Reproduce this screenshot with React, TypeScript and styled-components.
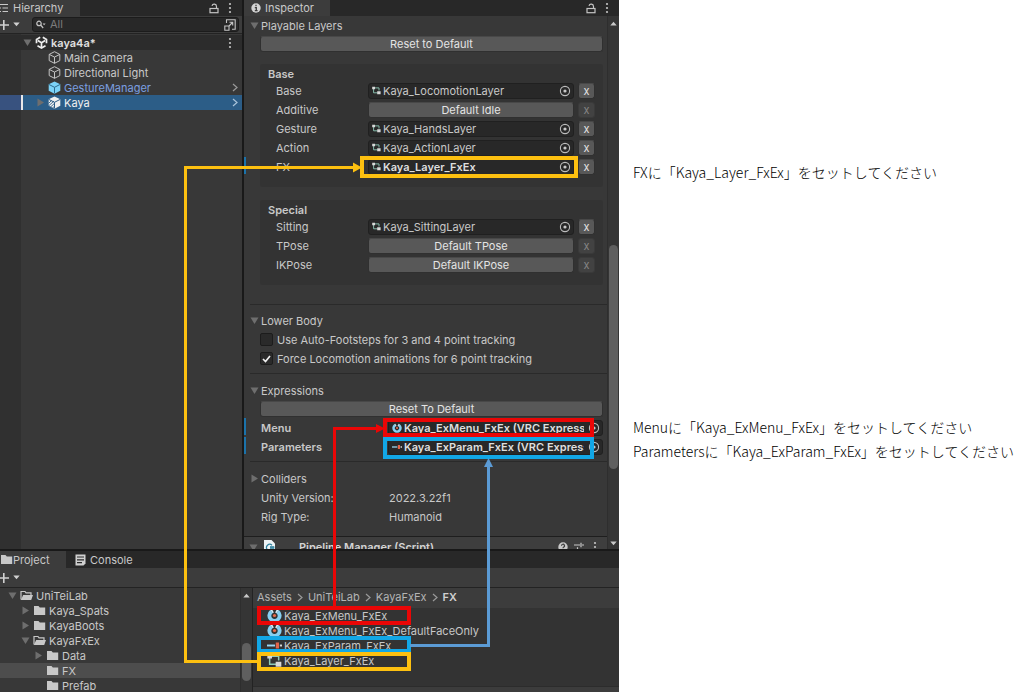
import React from 'react';
import styled, { createGlobalStyle } from 'styled-components';

const GlobalStyle = createGlobalStyle`
  *, *::before, *::after { box-sizing: border-box; }
  body { margin: 0; background: #fff; font-family: Inter, "Liberation Sans", sans-serif; }
  button, input { font: inherit; color: inherit; margin: 0; padding: 0; }
  h1, h2, p, ul { margin: 0; padding: 0; font: inherit; }
  svg { display: block; flex: none; }
`;

const c = {
  panel: '#383838',
  bar: '#3c3c3c',
  tabs: '#282828',
  box: '#333333',
  field: '#282828',
  button: '#585858',
  text: '#c8c8c8',
  bright: '#e4e4e4',
  line: '#2a2a2a',
  icon: '#c4c4c4',
  yellow: '#fdc010',
  red: '#ea0606',
  cyan: '#12a7e6',
  blue: '#5b9bd5',
};

/* ---------- page ---------- */

const Page = styled.div`
  display: flex;
  min-height: 100vh;
`;

const Editor = styled.main`
  position: relative;
  flex: 1 1 0;
  min-width: 0;
  display: flex;
  flex-direction: column;
  background: #191919;
  color: ${c.text};
  font-size: 11px;
  line-height: 16px;
  white-space: nowrap;
`;

const Notes = styled.aside`
  flex: 0 0 405px;
  display: flex;
  flex-direction: column;
  gap: 231px;
  padding: 160px 0 0 14px;
  color: #000;
  font-family: "Noto Sans CJK JP", sans-serif;
  font-weight: 300;
  font-size: 14px;
  line-height: 24px;
  white-space: nowrap;
`;

const UpperDock = styled.div`
  display: flex;
  gap: 2px;
  height: 549px;
`;

const LowerDock = styled.section`
  flex: 1;
  display: flex;
  flex-direction: column;
  margin-top: 2px;
  background: ${c.panel};
`;

/* ---------- shared parts ---------- */

const TabBar = styled.header<{ $h: number }>`
  display: flex;
  align-items: center;
  height: ${p => p.$h}px;
  flex: none;
  background: ${c.tabs};
  padding-right: 4px;
`;

const Tab = styled.button<{ $active?: boolean; $w: number; $pad?: number }>`
  display: flex;
  align-items: center;
  gap: 4px;
  width: ${p => p.$w}px;
  height: 100%;
  padding-left: ${p => p.$pad ?? 0}px;
  border: 0;
  background: ${p => (p.$active ? c.bar : 'transparent')};
`;

const ProjectTab = styled(Tab)`
  gap: 0;
`;

const Spacer = styled.span`
  flex: 1;
`;

const IconButton = styled.button`
  display: flex;
  align-items: center;
  justify-content: center;
  flex: none;
  width: 16px;
  height: 16px;
  border: 0;
  background: none;
  color: ${c.icon};
`;

const Toolbar = styled.div<{ $h: number }>`
  display: flex;
  align-items: center;
  height: ${p => p.$h}px;
  flex: none;
  background: ${c.bar};
  border-bottom: 1px solid #232323;
`;

const AddButton = styled.button`
  display: flex;
  align-items: center;
  gap: 3px;
  flex: none;
  width: 32px;
  border: 0;
  background: none;
  color: #d0d0d0;
`;

const Scroller = styled.div`
  display: flex;
  flex-direction: column;
  align-items: center;
  width: 12px;
  flex: none;
  padding: 5px 0 3px;
  background: #353535;
  border-left: 1px solid #2e2e2e;
  color: #c8c8c8;
`;

const Thumb = styled.div<{ $before: number; $h: number }>`
  width: 9px;
  height: ${p => p.$h}px;
  margin-top: ${p => p.$before}px;
  margin-bottom: auto;
  border-radius: 5px;
  background: #5f5f5f;
`;

const Highlight = styled.span<{ $color: string; $top: number; $bottom: number; $left: number; $right?: number; $w?: number }>`
  position: absolute;
  z-index: 1;
  top: ${p => p.$top}px;
  bottom: ${p => p.$bottom}px;
  left: ${p => p.$left}px;
  ${p => (p.$w ? `width: ${p.$w}px;` : `right: ${p.$right}px;`)}
  border: 4px solid ${p => p.$color};
  pointer-events: none;
`;

/* ---------- hierarchy ---------- */

const Hierarchy = styled.section`
  width: 242px;
  flex: none;
  display: flex;
  flex-direction: column;
  background: ${c.panel};
`;

const SearchBox = styled.label`
  display: flex;
  align-items: center;
  gap: 4px;
  flex: 1;
  min-width: 0;
  height: 15px;
  margin-right: 3px;
  padding-left: 3px;
  border: 1px solid #1c1c1c;
  border-radius: 3px;
  background: ${c.field};

  input {
    flex: 1;
    width: 0;
    min-width: 0;
    height: 13px;
    border: 0;
    outline: 0;
    background: none;
    line-height: 13px;
  }
  input::placeholder { color: #7c7c7c; opacity: 1; }
`;

const SceneTree = styled.ul`
  flex: 1;
  list-style: none;
  padding-top: 1px;
  background: linear-gradient(to right, #303030 21px, ${c.panel} 21px);
`;

const SceneRow = styled.li<{ $kind?: 'scene' | 'prefab' | 'selected'; $pad: number }>`
  display: flex;
  align-items: center;
  gap: 3px;
  height: 15px;
  padding: 0 4px 0 ${p => p.$pad}px;
  ${p => p.$kind === 'scene' && `background: #2c2c2c; color: #e0e0e0; font-weight: 600;`}
  ${p => p.$kind === 'prefab' && `color: #7b9fe0;`}
  ${p =>
    p.$kind === 'selected' &&
    `color: #f0f0f0; background: linear-gradient(to right, #38527f 21px, #e8e8e8 21px, #e8e8e8 23px, #2c5d87 23px);`}
`;

const CaretSlot = styled.span`
  display: flex;
  justify-content: center;
  width: 9px;
  flex: none;
  color: #6e6e6e;
`;

/* ---------- inspector ---------- */

const Inspector = styled.section`
  flex: 1;
  min-width: 0;
  display: flex;
  flex-direction: column;
  background: ${c.panel};
`;

const InspectorBody = styled.div`
  flex: 1;
  min-height: 0;
  display: flex;
`;

const Properties = styled.div`
  flex: 1;
  min-width: 0;
  overflow: hidden;
`;

const Section = styled.div<{ $top?: number; $bottom?: number }>`
  position: relative;
  padding: ${p => p.$top ?? 0}px 4px ${p => p.$bottom ?? 0}px 16px;
`;

const Foldout = styled.button`
  display: flex;
  align-items: center;
  gap: 2px;
  height: 19px;
  margin-left: -10px;
  border: 0;
  background: none;
`;

const Divider = styled.hr`
  height: 1px;
  margin: 0 0 0 6px;
  border: 0;
  background: ${c.line};
`;

const Button = styled.button`
  display: block;
  height: 16px;
  border: 1px solid #303030;
  border-top-color: #484848;
  border-radius: 3px;
  background: ${c.button};
  color: ${c.bright};
  line-height: 14px;
  min-width: 0;

  &:disabled { background: #424242; border-color: #3a3a3a; color: #858585; }
`;

const WideButton = styled(Button)`
  width: 100%;
  margin: 1px 0;
`;

const Group = styled.div<{ $top: number }>`
  margin-top: ${p => p.$top}px;
  padding: 2px 8px 11px;
  border-radius: 3px;
  background: ${c.box};
`;

const GroupTitle = styled.h2`
  height: 15px;
  line-height: 16px;
  font-weight: 600;
`;

const overrideBar = `
  &::before {
    content: "";
    position: absolute;
    left: -16px;
    top: 0;
    width: 2px;
    height: 17px;
    background: #1b73ab;
  }
`;

const LayerRow = styled.div<{ $override?: boolean }>`
  position: relative;
  display: grid;
  grid-template-columns: 92px minmax(0, 1fr) 17px;
  align-items: center;
  height: 19px;
  margin-left: -8px;
  padding-left: 16px;
  ${p => p.$override && overrideBar}
`;

const LayerValue = styled.div`
  display: grid;
  margin-right: 4px;
`;

const ObjectField = styled.div<{ $bold?: boolean }>`
  position: relative;
  display: flex;
  align-items: center;
  gap: 2px;
  height: 16px;
  min-width: 0;
  padding-left: 3px;
  border: 1px solid #202020;
  border-radius: 3px;
  background: ${c.field};
  ${p => p.$bold && `font-weight: 600; color: #dedede;`}
`;

const FieldText = styled.span`
  flex: 1;
  min-width: 0;
  overflow: hidden;
`;

const PropertyRow = styled.div<{ $override?: boolean }>`
  position: relative;
  display: grid;
  grid-template-columns: 127px minmax(0, 1fr);
  align-items: center;
  height: 19px;
  padding: 0 0 0 1px;
  ${p => p.$override && `font-weight: 600; ${overrideBar}`}
`;

const PropertyText = styled.span`
  padding-left: 1px;
`;

const CheckRow = styled.label`
  display: flex;
  align-items: center;
  gap: 4px;
  height: 19px;

  input {
    appearance: none;
    width: 13px;
    height: 13px;
    border: 1px solid #1c1c1c;
    border-radius: 2px;
    background: #2a2a2a;
  }
  input:checked {
    background: #2a2a2a url("data:image/svg+xml,%3Csvg xmlns='http://www.w3.org/2000/svg' viewBox='0 0 11 11'%3E%3Cpath d='M2 6l2.5 2.5L9 3' fill='none' stroke='%23f0f0f0' stroke-width='1.7'/%3E%3C/svg%3E");
  }
`;

const ComponentHeader = styled.div`
  display: flex;
  align-items: center;
  height: 21px;
  padding: 0 4px 0 5px;
  border-top: 1px solid #1e1e1e;
  background: #3e3e3e;
  font-weight: 600;
  color: #d4d4d4;
`;

const ComponentTitle = styled.span`
  margin-left: 24px;
`;

const ScriptSlot = styled.span`
  margin-left: 6px;
`;

/* ---------- project ---------- */

const ProjectBody = styled.div`
  flex: 1;
  display: flex;
`;

const FolderTree = styled.ul`
  width: 240px;
  flex: none;
  list-style: none;
`;

const FolderRow = styled.li<{ $level: number; $selected?: boolean }>`
  display: flex;
  align-items: center;
  gap: 3px;
  height: 15px;
  padding-left: ${p => 8 + p.$level * 13}px;
  background: ${p => (p.$selected ? '#4d4d4d' : 'transparent')};
`;

const Assets = styled.div`
  flex: 1;
  min-width: 0;
  display: flex;
  flex-direction: column;
  border-left: 1px solid #232323;
  background: ${c.box};
`;

const Breadcrumb = styled.nav`
  display: flex;
  align-items: center;
  gap: 5px;
  height: 20px;
  padding: 0 0 2px 4px;
  background: ${c.bar};

  a { color: #b4b4b4; text-decoration: none; }
  a:last-child { color: #d0d0d0; font-weight: 600; }
`;

const AssetList = styled.ul`
  flex: 1;
  list-style: none;
`;

const AssetRow = styled.li`
  position: relative;
  display: flex;
  align-items: center;
  gap: 2px;
  height: 15px;
  padding-left: 14px;
`;

const AssetFooter = styled.div`
  height: 7px;
  background: ${c.bar};
  border-top: 1px solid #2c2c2c;
`;

const Arrows = styled.svg`
  position: absolute;
  top: 0;
  left: 0;
  z-index: 2;
  pointer-events: none;
`;

/* ---------- icons ---------- */

const Caret = ({ open }: { open?: boolean }) => (
  <svg width="9" height="9" viewBox="0 0 9 9" fill="currentColor">
    <path d={open ? 'M.5 1.5h8L4.500 8z' : 'M1.500 .5v8L8 4.500z'} />
  </svg>
);

const Dots = () => (
  <svg width="4" height="12" viewBox="0 0 4 12" fill="currentColor">
    <circle cx="2" cy="2" r="1.100" /><circle cx="2" cy="6" r="1.100" /><circle cx="2" cy="10" r="1.100" />
  </svg>
);

const Lock = () => (
  <svg width="10" height="11" viewBox="0 0 10 11" fill="none" stroke="currentColor" strokeWidth="1.200">
    <rect x="1" y="5.500" width="8" height="4.200" />
    <path d="M7.500 5.500V3.400a2.300 2.300 0 0 0-4.500-.6" />
  </svg>
);

const ListIcon = () => (
  <svg width="9" height="10" viewBox="0 0 9 10" stroke="currentColor" strokeWidth="1.200">
    <path d="M0 1.500h8M0 5h1M2.500 5H8M0 8.500h1M2.500 8.500H8" />
  </svg>
);

const Plus = () => (
  <svg width="10" height="12" viewBox="0 0 10 12" stroke="currentColor" strokeWidth="1.600">
    <path d="M0 6h9M3.800 1v10" />
  </svg>
);

const Down = ({ up }: { up?: boolean }) => (
  <svg width="7" height="5" viewBox="0 0 7 5" fill="currentColor">
    <path d={up ? 'M.3 4.500h6.400L3.500 .8z' : 'M.3 .5h6.400L3.500 4.200z'} />
  </svg>
);

const Search = () => (
  <svg width="10" height="9" viewBox="0 0 10 9" fill="none" stroke="#c4c4c4" strokeWidth="1.200">
    <circle cx="3" cy="3.400" r="2.200" />
    <path d="M4.600 5l2.600 3" />
    <path d="M6.600 3.500h3L8.100 5.200z" fill="#c4c4c4" stroke="none" />
  </svg>
);

const PopOut = () => (
  <svg width="12" height="12" viewBox="0 0 12 12" fill="none" stroke="currentColor" strokeWidth="1.100">
    <path d="M2.500 4V.8h8.700v9.400H8" />
    <path d="M.8 7h4.200v4.200H.8z" />
    <path d="M5 7l3.500-3.500M5.500 3.300h3.200v3.200" />
  </svg>
);

const UnityLogo = () => (
  <svg width="13" height="13" viewBox="0 0 13 13" fill="none" stroke="#ececec" strokeWidth="1.700">
    <path d="M5.200 1.300L1.500 3.500v3.800M7.800 1.300l3.700 2.200v3.800M2.500 9.800l4 2.200 4-2.200" />
    <path d="M6.500 6.700v4.800M6.500 6.700L2.800 4.500M6.500 6.700l3.700-2.200" />
  </svg>
);

const Cube = ({ kind }: { kind?: 'prefab' | 'variant' }) => {
  if (!kind)
    return (
      <svg width="13" height="13" viewBox="0 0 13 13" fill="none" stroke="#c4c4c4" strokeWidth="1">
        <path d="M6.500 .7l5.300 2.700v6.200l-5.300 2.700L1.200 9.600V3.400zM1.200 3.400l5.300 2.700 5.300-2.700M6.500 6.100v6.200" />
      </svg>
    );
  const fill = kind === 'prefab' ? '#7cd3f8' : '#f0f0f0';
  const seam = kind === 'prefab' ? '#2d6b8c' : '#2c5d87';
  return (
    <svg width="13" height="13" viewBox="0 0 13 13">
      <path d="M6.500 .4l5.800 2.800v6.500l-5.800 3L.7 9.700V3.200z" fill={fill} />
      <path d="M.8 3.400l5.700 2.900 5.700-2.900M6.500 6.300v6.200" fill="none" stroke={seam} strokeWidth="1" />
      {kind === 'variant' && <path d="M.5 7.500l3-3M.5 10l5.500-5M2 11.500l4.300-4M4 12.600l2.500-2.400" stroke={seam} strokeWidth=".9" />}
    </svg>
  );
};

const Chevron = ({ color = '#9a9a9a' }: { color?: string }) => (
  <svg width="6" height="9" viewBox="0 0 6 9" fill="none" stroke={color} strokeWidth="1.200">
    <path d="M1 1l4 3.500L1 8" />
  </svg>
);

const Info = () => (
  <svg width="10" height="10" viewBox="0 0 10 10">
    <circle cx="5" cy="5" r="4.700" fill="#d4d4d4" />
    <path d="M5 1.800v1.500M3.800 4.600H5.300v3M3.800 7.600h2.800" stroke="#3c3c3c" strokeWidth="1.300" fill="none" />
  </svg>
);

const Target = () => (
  <svg width="12" height="12" viewBox="0 0 12 12">
    <circle cx="6" cy="6" r="4.600" fill="none" stroke="#bcbcbc" strokeWidth="1.100" />
    <circle cx="6" cy="6" r="1.600" fill="#c8c8c8" />
  </svg>
);

const Controller = ({ size = 9 }: { size?: number }) => (
  <svg width={size} height={size} viewBox="0 0 9 9">
    <path d="M2 1.900h5V4.500M1.600 3v3.800h4" fill="none" stroke="#8fcbb8" strokeWidth=".9" />
    <path d="M.2 .7h2.800v2.600H.2zM5.200 5.200h3.400v3H5.200z" fill="#d8d8d8" />
  </svg>
);

const MenuIcon = ({ size = 10 }: { size?: number }) => (
  <svg width={size} height={size} viewBox="0 0 14 14">
    <path d="M3 1.800A6.600 6.600 0 1 0 11 1.800L8.800 4.800a3 3 0 1 1-3.600 0z" fill="#86d0f2" />
    <path d="M3 1.800L5.200 4.800 6.400 4.200 4.600 1zM11 1.800L8.800 4.800 7.600 4.200 9.400 1z" fill="#d4eefa" />
    <circle cx="7" cy="7" r="1.500" fill="#e86a4a" />
  </svg>
);

const ParamIcon = ({ size = 10 }: { size?: number }) => (
  <svg width={size} height={size} viewBox="0 0 14 14">
    <path d="M0 7h7.500" stroke="#9ad8f4" strokeWidth="1.800" />
    <path d="M12 7h2" stroke="#d8d8d8" strokeWidth="1.800" />
    <path d="M8.200 4.200h3v5.600h-3z" fill="#e0654a" />
  </svg>
);

const Folder = ({ open }: { open?: boolean }) => (
  <svg width="13" height="11" viewBox="0 0 13 11">
    {open ? (
      <>
        <path d="M1 9.500V1.500h4l1 1.300h5V5" fill="none" stroke="#c8c8c8" strokeWidth="1.200" />
        <path d="M3.200 5H13l-1.800 5H.8z" fill="#c8c8c8" />
      </>
    ) : (
      <path d="M1 1h4.500l1.300 1.600h5.400V10H1z" fill="#c8c8c8" />
    )}
  </svg>
);

const ConsoleIcon = () => (
  <svg width="11" height="12" viewBox="0 0 11 12">
    <path d="M.5 .5h10v9l-2 2h-8z" fill="#d0d0d0" />
    <path d="M2 3h7M2 5.800h7M2 8.600h5" stroke="#282828" strokeWidth="1.200" />
  </svg>
);

const ScriptIcon = () => (
  <svg width="11" height="14" viewBox="0 0 11 14">
    <path d="M0 0h7.500L11 3.500V14H0z" fill="#eef4f6" />
    <path d="M8 5.200a3.200 3.200 0 1 0 0 4.600M7 6v4M9 6v4M6 7.200h4.500M6 9h4.500" fill="none" stroke="#2d7f9c" strokeWidth="1.200" />
  </svg>
);

const Help = () => (
  <svg width="10" height="10" viewBox="0 0 10 10">
    <circle cx="5" cy="5" r="4.700" fill="#c8c8c8" />
    <path d="M3.500 3.800a1.500 1.500 0 1 1 2.300 1.200q-.8.500-.8 1.200M5 7v1.200" fill="none" stroke="#3c3c3c" strokeWidth="1.200" />
  </svg>
);

const Presets = () => (
  <svg width="10" height="10" viewBox="0 0 10 10" stroke="#c8c8c8" strokeWidth="1.200">
    <path d="M0 3h6M8 3h2M7 .8v4.400M0 7.500h2M4 7.500h6M3.500 5.300v4.400" />
  </svg>
);

/* ---------- content ---------- */

type Layer = { label: string; asset?: string; fallback?: string; marked?: boolean };

const baseLayers: Layer[] = [
  { label: 'Base', asset: 'Kaya_LocomotionLayer' },
  { label: 'Additive', fallback: 'Default Idle' },
  { label: 'Gesture', asset: 'Kaya_HandsLayer' },
  { label: 'Action', asset: 'Kaya_ActionLayer' },
  { label: 'FX', asset: 'Kaya_Layer_FxEx', marked: true },
];

const specialLayers: Layer[] = [
  { label: 'Sitting', asset: 'Kaya_SittingLayer' },
  { label: 'TPose', fallback: 'Default TPose' },
  { label: 'IKPose', fallback: 'Default IKPose' },
];

const folders = [
  { name: 'UniTeiLab', level: 0, open: true },
  { name: 'Kaya_Spats', level: 1, closed: true },
  { name: 'KayaBoots', level: 1, closed: true },
  { name: 'KayaFxEx', level: 1, open: true },
  { name: 'Data', level: 2, closed: true },
  { name: 'FX', level: 2, selected: true },
  { name: 'Prefab', level: 2 },
];

const LayerGroup = ({ title, layers, top }: { title: string; layers: Layer[]; top: number }) => (
  <Group $top={top}>
    <GroupTitle>{title}</GroupTitle>
    {layers.map(l => (
      <LayerRow key={l.label} $override={l.marked}>
        <span>{l.label}</span>
        <LayerValue>
          {l.asset ? (
            <ObjectField $bold={l.marked}>
              <Controller />
              <FieldText>{l.asset}</FieldText>
              <IconButton aria-label={`Select ${l.label}`}><Target /></IconButton>
              {l.marked && <Highlight $color={c.yellow} $top={-4} $bottom={-4} $left={-9} $right={-5} />}
            </ObjectField>
          ) : (
            <Button>{l.fallback}</Button>
          )}
        </LayerValue>
        <Button disabled={!l.asset}>x</Button>
      </LayerRow>
    ))}
  </Group>
);

export default function App() {
  return (
    <>
      <GlobalStyle />
      <Page>
        <Editor>
          <UpperDock>
            <Hierarchy>
              <TabBar $h={16}>
                <Tab $active $w={80}><ListIcon />Hierarchy</Tab>
                <Spacer />
                <IconButton aria-label="Lock"><Lock /></IconButton>
                <IconButton aria-label="Hierarchy menu"><Dots /></IconButton>
              </TabBar>
              <Toolbar $h={18}>
                <AddButton aria-label="Create"><Plus /><Down /></AddButton>
                <SearchBox>
                  <Search />
                  <input type="text" placeholder="All" aria-label="Search hierarchy" />
                  <IconButton aria-label="Open search"><PopOut /></IconButton>
                </SearchBox>
              </Toolbar>
              <SceneTree>
                <SceneRow $kind="scene" $pad={23}>
                  <CaretSlot><Caret open /></CaretSlot><UnityLogo />kaya4a*
                  <Spacer />
                  <IconButton aria-label="Scene menu"><Dots /></IconButton>
                </SceneRow>
                <SceneRow $pad={36}><CaretSlot /><Cube />Main Camera</SceneRow>
                <SceneRow $pad={36}><CaretSlot /><Cube />Directional Light</SceneRow>
                <SceneRow $kind="prefab" $pad={36}><CaretSlot /><Cube kind="prefab" />GestureManager<Spacer /><Chevron /></SceneRow>
                <SceneRow $kind="selected" $pad={36}><CaretSlot><Caret /></CaretSlot><Cube kind="variant" />Kaya<Spacer /><Chevron color="#a9c3da" /></SceneRow>
              </SceneTree>
            </Hierarchy>

            <Inspector>
              <TabBar $h={16}>
                <Tab $active $w={86} $pad={7}><Info />Inspector</Tab>
                <Spacer />
                <IconButton aria-label="Lock"><Lock /></IconButton>
                <IconButton aria-label="Inspector menu"><Dots /></IconButton>
              </TabBar>
              <InspectorBody>
                <Properties>
                  <Section $bottom={19}>
                    <Foldout><CaretSlot><Caret open /></CaretSlot>Playable Layers</Foldout>
                    <WideButton>Reset to Default</WideButton>
                    <LayerGroup title="Base" layers={baseLayers} top={12} />
                    <LayerGroup title="Special" layers={specialLayers} top={13} />
                  </Section>
                  <Divider />
                  <Section $top={6} $bottom={5}>
                    <Foldout><CaretSlot><Caret open /></CaretSlot>Lower Body</Foldout>
                    <CheckRow><input type="checkbox" />Use Auto-Footsteps for 3 and 4 point tracking</CheckRow>
                    <CheckRow><input type="checkbox" defaultChecked />Force Locomotion animations for 6 point tracking</CheckRow>
                  </Section>
                  <Divider />
                  <Section $top={7} $bottom={5}>
                    <Foldout><CaretSlot><Caret open /></CaretSlot>Expressions</Foldout>
                    <WideButton>Reset To Default</WideButton>
                    <PropertyRow $override>
                      <span>Menu</span>
                      <ObjectField $bold>
                        <MenuIcon />
                        <FieldText>Kaya_ExMenu_FxEx (VRC Expressions Menu)</FieldText>
                        <IconButton aria-label="Select Menu"><Target /></IconButton>
                        <Highlight $color={c.red} $top={-3} $bottom={-2} $left={-6} $right={8} />
                      </ObjectField>
                    </PropertyRow>
                    <PropertyRow $override>
                      <span>Parameters</span>
                      <ObjectField $bold>
                        <ParamIcon />
                        <FieldText>Kaya_ExParam_FxEx (VRC Expression Parameters)</FieldText>
                        <IconButton aria-label="Select Parameters"><Target /></IconButton>
                        <Highlight $color={c.cyan} $top={-3} $bottom={-5} $left={-6} $right={8} />
                      </ObjectField>
                    </PropertyRow>
                  </Section>
                  <Divider />
                  <Section $top={7} $bottom={10}>
                    <Foldout><CaretSlot><Caret /></CaretSlot>Colliders</Foldout>
                    <PropertyRow><span>Unity Version:</span><PropertyText>2022.3.22f1</PropertyText></PropertyRow>
                    <PropertyRow><span>Rig Type:</span><PropertyText>Humanoid</PropertyText></PropertyRow>
                  </Section>
                  <ComponentHeader>
                    <CaretSlot><Caret open /></CaretSlot>
                    <ScriptSlot><ScriptIcon /></ScriptSlot>
                    <ComponentTitle>Pipeline Manager (Script)</ComponentTitle>
                    <Spacer />
                    <IconButton aria-label="Help"><Help /></IconButton>
                    <IconButton aria-label="Presets"><Presets /></IconButton>
                    <IconButton aria-label="Component menu"><Dots /></IconButton>
                  </ComponentHeader>
                </Properties>
                <Scroller>
                  <Down up />
                  <Thumb $before={219} $h={224} />
                  <Down />
                </Scroller>
              </InspectorBody>
            </Inspector>
          </UpperDock>

          <LowerDock>
            <TabBar $h={17}>
              <ProjectTab $active $w={66}><Folder />Project</ProjectTab>
              <Tab $w={80} $pad={9}><ConsoleIcon />Console</Tab>
            </TabBar>
            <Toolbar $h={20}>
              <AddButton aria-label="Create asset"><Plus /><Down /></AddButton>
            </Toolbar>
            <ProjectBody>
              <FolderTree>
                {folders.map(f => (
                  <FolderRow key={f.name} $level={f.level} $selected={f.selected}>
                    <CaretSlot>{(f.open || f.closed) && <Caret open={f.open} />}</CaretSlot>
                    <Folder open={f.open} />
                    {f.name}
                  </FolderRow>
                ))}
              </FolderTree>
              <Scroller>
                <Down up />
                <Thumb $before={45} $h={38} />
              </Scroller>
              <Assets>
                <Breadcrumb aria-label="Folder path">
                  <a href="#assets">Assets</a><Chevron />
                  <a href="#uniteilab">UniTeiLab</a><Chevron />
                  <a href="#kayafxex">KayaFxEx</a><Chevron />
                  <a href="#fx">FX</a>
                </Breadcrumb>
                <AssetList>
                  <AssetRow><MenuIcon size={15} />Kaya_ExMenu_FxEx<Highlight $color={c.red} $top={-2} $bottom={-2} $left={4} $w={154} /></AssetRow>
                  <AssetRow><MenuIcon size={15} />Kaya_ExMenu_FxEx_DefaultFaceOnly</AssetRow>
                  <AssetRow><ParamIcon size={15} />Kaya_ExParam_FxEx<Highlight $color={c.cyan} $top={-2} $bottom={0} $left={4} $w={154} /></AssetRow>
                  <AssetRow><Controller size={15} />Kaya_Layer_FxEx<Highlight $color={c.yellow} $top={-1} $bottom={-3} $left={4} $w={154} /></AssetRow>
                </AssetList>
                <AssetFooter />
              </Assets>
            </ProjectBody>
          </LowerDock>

          <Arrows width="619" height="692" viewBox="0 0 619 692" fill="none" strokeWidth="3" aria-hidden="true">
            <path d="M258 661.500H185.500V167.500H355" stroke={c.yellow} />
            <path d="M353 162.500l9 5-9 5z" fill={c.yellow} />
            <path d="M334.500 608V428.500H378" stroke={c.red} />
            <path d="M376 424l9 4.500-9 4.500z" fill={c.red} />
            <path d="M410 645.500H488.500V466" stroke={c.blue} />
            <path d="M484 467l4.500-9 4.500 9z" fill={c.blue} />
          </Arrows>
        </Editor>

        <Notes>
          <p>FXに「Kaya_Layer_FxEx」をセットしてください</p>
          <div>
            <p>Menuに「Kaya_ExMenu_FxEx」をセットしてください</p>
            <p>Parametersに「Kaya_ExParam_FxEx」をセットしてください</p>
          </div>
        </Notes>
      </Page>
    </>
  );
}
